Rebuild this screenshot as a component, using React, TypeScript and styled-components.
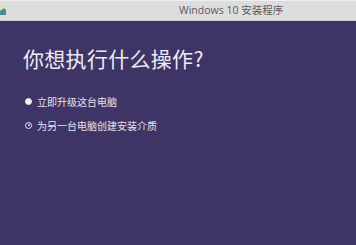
import React from "react";
import styled, { createGlobalStyle } from "styled-components";

const Global = createGlobalStyle`
  html, body { margin: 0; padding: 0; width: 356px; height: 245px; overflow: hidden; }
  body { font-family: "Noto Sans CJK SC", "Noto Sans", sans-serif; background: #3e3566; }
`;

const Window = styled.div`
  width: 356px;
  height: 245px;
  display: flex;
  flex-direction: column;
  background: #3e3566;
`;

const TitleBar = styled.div`
  height: 19px;
  flex: none;
  background: #dddddd;
  border-top: 1px solid #eeeeee;
  border-bottom: 1px solid #c9c9cf;
  display: flex;
  align-items: center;
  position: relative;
`;

const AppIcon = styled.svg`
  width: 7px;
  height: 8px;
`;

const Title = styled.div`
  position: absolute;
  left: 179px;
  top: 1px;
  font-family: "Open Sans", "Noto Sans CJK SC", sans-serif;
  font-size: 10.5px;
  line-height: 17px;
  color: #5a5a5a;
  white-space: nowrap;
`;

const Content = styled.div`
  flex: 1;
  padding: 24px 0 0 23px;
  display: flex;
  flex-direction: column;
`;

const Heading = styled.h1`
  margin: 0;
  font-weight: 400;
  font-size: 21px;
  line-height: 26px;
  color: #ecebf2;
  letter-spacing: 0.3px;
`;

const Options = styled.div`
  margin-top: 21px;
  display: flex;
  flex-direction: column;
  gap: 6px;
  padding-left: 2px;
`;

const Option = styled.div`
  display: flex;
  align-items: center;
  height: 18px;
  gap: 5px;
  font-size: 10px;
  color: #e4e2ec;
`;

const Radio = styled.span<{ $checked?: boolean }>`
  box-sizing: border-box;
  width: 7px;
  height: 7px;
  border-radius: 50%;
  flex: none;
  background: ${(p) => (p.$checked ? "#f2f2f6" : "#3e3566")};
  border: 1.5px solid #e6e4ee;
  display: flex;
  align-items: center;
  justify-content: center;
  &::after {
    content: "";
    width: 2px;
    height: 2px;
    border-radius: 50%;
    background: ${(p) => (p.$checked ? "transparent" : "#e6e4ee")};
  }
`;

export default function App() {
  return (
    <Window>
      <Global />
      <TitleBar>
        <AppIcon viewBox="0 0 7 8">
          <path d="M0 4 L4 1 L6 3 L6 8 L0 8 Z" fill="#3f9a6a" />
          <path d="M0 6 L6 6 L6 8 L0 8 Z" fill="#4a7fc0" />
        </AppIcon>
        <Title>Windows 10 安装程序</Title>
      </TitleBar>
      <Content>
        <Heading>你想执行什么操作?</Heading>
        <Options>
          <Option>
            <Radio $checked />
            立即升级这台电脑
          </Option>
          <Option>
            <Radio />
            为另一台电脑创建安装介质
          </Option>
        </Options>
      </Content>
    </Window>
  );
}
